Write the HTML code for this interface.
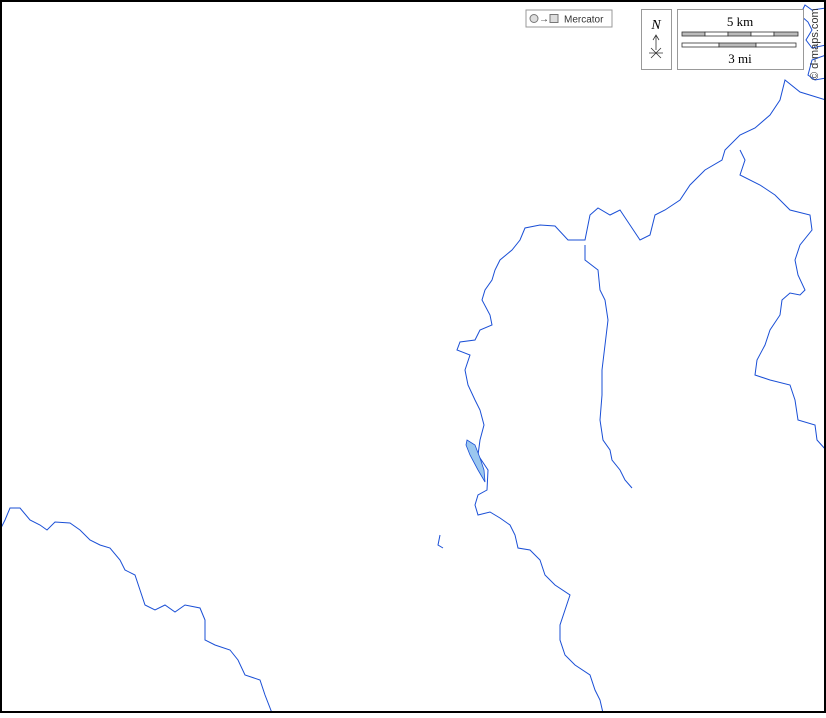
<!DOCTYPE html>
<html><head><style>
body{margin:0;width:826px;height:713px;overflow:hidden;background:#fff;font-family:"Liberation Sans",sans-serif}
</style></head><body>
<svg width="826" height="713" viewBox="0 0 826 713" xmlns="http://www.w3.org/2000/svg">
<rect x="0" y="0" width="826" height="713" fill="#fff"/>
<g fill="none" stroke="#1a4fd6" stroke-width="1">
<path d="M826,100 L800,92 785,80 780,100 770,115 755,128 740,135 725,150 722,160 705,170 690,185 680,200 665,210 655,215 650,235 640,240 630,225 620,210 610,215 598,208 590,215 585,240 568,240 555,226 540,225 525,228 520,240 512,250 500,260 495,270 492,280 485,290 482,300 490,315 492,325 480,330 475,340 460,342 457,350 470,355 465,370 468,385 475,400 480,410 484,425 480,440 478,455 488,470 487,490 478,495 475,505 478,515 490,512 500,518 510,525 515,535 518,548 530,550 540,560 545,575 555,585 570,595 565,610 560,625 560,640 565,655 575,665 590,675 595,690 600,700 603,713"/>
<path d="M740,150 L745,160 740,175 760,185 775,195 790,210 810,215 812,230 800,245 795,260 798,275 805,290 800,295 790,293 782,300 780,315 770,330 765,345 757,360 755,375 770,380 790,385 795,400 798,420 815,425 817,440 826,450"/>
<path d="M585,245 L585,260 598,270 600,290 605,300 608,320 605,345 602,370 602,395 600,420 603,440 610,450 612,460 620,470 625,480 632,488"/>
<path d="M826,8 L812,10 805,5 800,15 808,22 812,30 806,40 812,48 826,45 M826,55 L812,60 808,75 815,80 826,78"/>
<path d="M0,530 L5,520 10,508 20,508 30,520 40,525 47,530 55,522 70,523 80,530 90,540 100,545 110,548 120,560 125,570 135,575 140,590 145,605 155,610 165,605 175,612 185,605 200,608 205,620 205,640 215,645 230,650 238,660 245,675 260,680 265,695 272,713"/>
<path d="M440,535 L438,545 443,548"/>
</g>
<path d="M467,440 L475,445 480,458 484,470 485,482 478,470 470,455 466,445Z" fill="#9bc7ef" stroke="#1a4fd6" stroke-width="0.8"/>
<rect x="1" y="1" width="824" height="711" fill="none" stroke="#000" stroke-width="2"/>
<rect x="526" y="10" width="86" height="17" fill="#fff" stroke="#999"/>
<circle cx="534" cy="18.5" r="4" fill="#ddd" stroke="#777"/>
<text x="539" y="22" font-size="10" fill="#333">→</text>
<rect x="550" y="14.5" width="8" height="8" fill="#ddd" stroke="#777"/>
<text x="564" y="22.5" font-size="10" fill="#333">Mercator</text>
<rect x="641.5" y="9.5" width="30" height="60" fill="#fff" stroke="#999"/>
<text x="656" y="29" font-size="14" font-style="italic" font-family="Liberation Serif" text-anchor="middle">N</text>
<path d="M656,50 V36 M653,40 L656,35 659,40 M649,53 H663 M651,48 L661,58 M661,48 L651,58" stroke="#333" stroke-width="0.8" fill="none"/>
<rect x="677.5" y="9.5" width="126" height="60" fill="#fff" stroke="#999"/>
<text x="740" y="26" font-size="13" font-family="Liberation Serif" text-anchor="middle">5 km</text>
<text x="740" y="63" font-size="13" font-family="Liberation Serif" text-anchor="middle">3 mi</text>
<g stroke="#333" stroke-width="0.8">
<rect x="682" y="32" width="23" height="4" fill="#bbb"/><rect x="705" y="32" width="23" height="4" fill="#fff"/><rect x="728" y="32" width="23" height="4" fill="#bbb"/><rect x="751" y="32" width="23" height="4" fill="#fff"/><rect x="774" y="32" width="24" height="4" fill="#bbb"/>
<rect x="682" y="43" width="37" height="4" fill="#fff"/><rect x="719" y="43" width="37" height="4" fill="#bbb"/><rect x="756" y="43" width="40" height="4" fill="#fff"/>
</g>
<text transform="translate(818,80) rotate(-90)" font-size="11" fill="#333">© d-maps.com</text>
</svg>
</body></html>
